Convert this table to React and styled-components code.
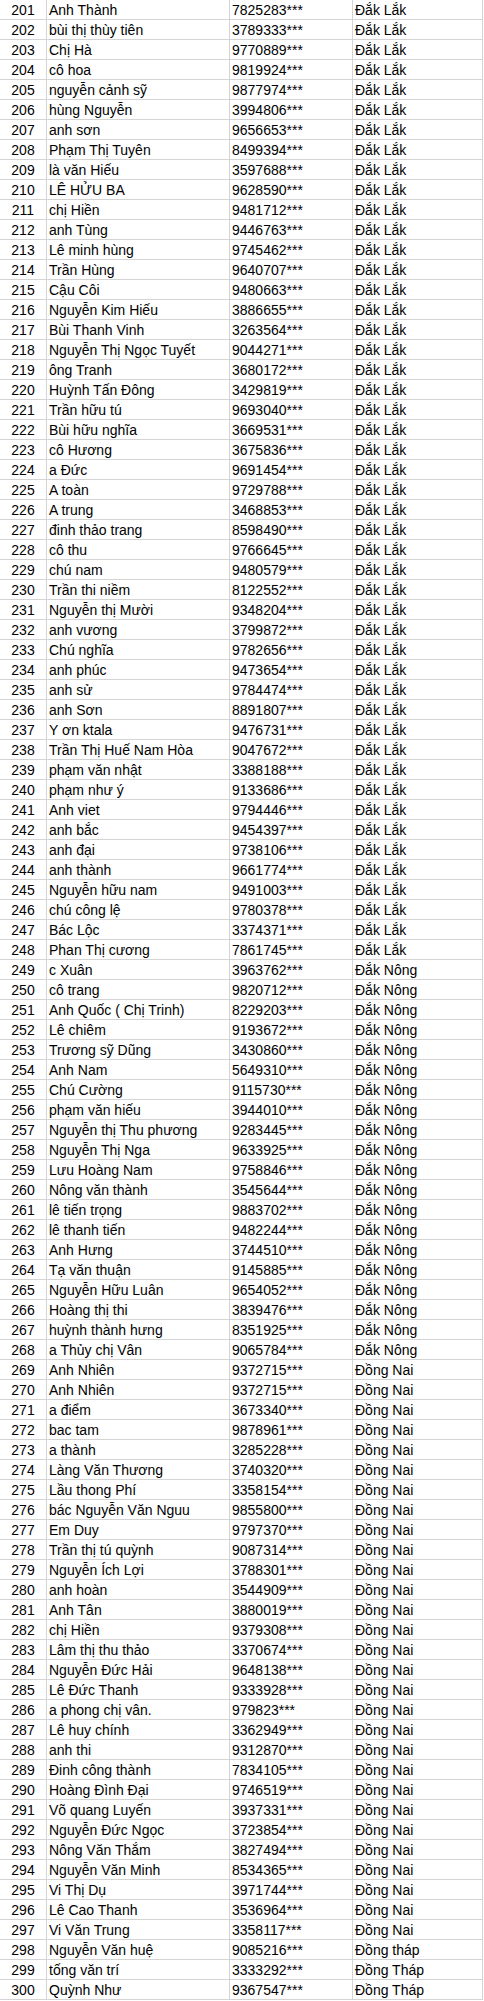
import React from 'react';
import styled, { createGlobalStyle } from 'styled-components';

const GlobalStyle = createGlobalStyle`
  html, body {
    margin: 0;
    padding: 0;
    background: #ffffff;
  }
`;

// name, phone prefix
const rows = [
  ['Anh Thành', '7825283'],
  ['bùi thị thùy tiên', '3789333'],
  ['Chị Hà', '9770889'],
  ['cô hoa', '9819924'],
  ['nguyễn cảnh sỹ', '9877974'],
  ['hùng Nguyễn', '3994806'],
  ['anh sơn', '9656653'],
  ['Phạm Thị Tuyên', '8499394'],
  ['là văn Hiếu', '3597688'],
  ['LÊ HỬU BA', '9628590'],
  ['chị Hiền', '9481712'],
  ['anh Tùng', '9446763'],
  ['Lê minh hùng', '9745462'],
  ['Trần Hùng', '9640707'],
  ['Cậu Côi', '9480663'],
  ['Nguyễn Kim Hiếu', '3886655'],
  ['Bùi Thanh Vinh', '3263564'],
  ['Nguyễn Thị Ngọc Tuyết', '9044271'],
  ['ông Tranh', '3680172'],
  ['Huỳnh Tấn Đông', '3429819'],
  ['Trần hữu tú', '9693040'],
  ['Bùi hữu nghĩa', '3669531'],
  ['cô Hương', '3675836'],
  ['a Đức', '9691454'],
  ['A toàn', '9729788'],
  ['A trung', '3468853'],
  ['đinh thảo trang', '8598490'],
  ['cô thu', '9766645'],
  ['chú nam', '9480579'],
  ['Trần thi niềm', '8122552'],
  ['Nguyễn thị Mười', '9348204'],
  ['anh vương', '3799872'],
  ['Chú nghĩa', '9782656'],
  ['anh phúc', '9473654'],
  ['anh sử', '9784474'],
  ['anh Sơn', '8891807'],
  ['Y ơn ktala', '9476731'],
  ['Trần Thị Huế Nam Hòa', '9047672'],
  ['phạm văn nhật', '3388188'],
  ['phạm như ý', '9133686'],
  ['Anh viet', '9794446'],
  ['anh bắc', '9454397'],
  ['anh đại', '9738106'],
  ['anh thành', '9661774'],
  ['Nguyễn hữu nam', '9491003'],
  ['chú công lệ', '9780378'],
  ['Bác Lộc', '3374371'],
  ['Phan Thị cương', '7861745'],
  ['c Xuân', '3963762'],
  ['cô trang', '9820712'],
  ['Anh Quốc ( Chị Trinh)', '8229203'],
  ['Lê chiêm', '9193672'],
  ['Trương sỹ Dũng', '3430860'],
  ['Anh Nam', '5649310'],
  ['Chú Cường', '9115730'],
  ['phạm văn hiếu', '3944010'],
  ['Nguyễn thị Thu phương', '9283445'],
  ['Nguyễn Thị Nga', '9633925'],
  ['Lưu Hoàng Nam', '9758846'],
  ['Nông văn thành', '3545644'],
  ['lê tiến trọng', '9883702'],
  ['lê thanh tiến', '9482244'],
  ['Anh Hưng', '3744510'],
  ['Tạ văn thuận', '9145885'],
  ['Nguyễn Hữu Luân', '9654052'],
  ['Hoàng thị thi', '3839476'],
  ['huỳnh thành hưng', '8351925'],
  ['a Thủy chị Vân', '9065784'],
  ['Anh Nhiên', '9372715'],
  ['Anh Nhiên', '9372715'],
  ['a điểm', '3673340'],
  ['bac tam', '9878961'],
  ['a thành', '3285228'],
  ['Làng Văn Thương', '3740320'],
  ['Lầu thong Phí', '3358154'],
  ['bác Nguyễn Văn Nguu', '9855800'],
  ['Em Duy', '9797370'],
  ['Trần thị tú quỳnh', '9087314'],
  ['Nguyễn Ích Lợi', '3788301'],
  ['anh hoàn', '3544909'],
  ['Anh Tân', '3880019'],
  ['chị Hiền', '9379308'],
  ['Lâm thị thu thảo', '3370674'],
  ['Nguyễn Đức Hải', '9648138'],
  ['Lê Đức Thanh', '9333928'],
  ['a phong chị vân.', '979823'],
  ['Lê huy chính', '3362949'],
  ['anh thi', '9312870'],
  ['Đinh công thành', '7834105'],
  ['Hoàng Đình Đại', '9746519'],
  ['Võ quang Luyến', '3937331'],
  ['Nguyễn Đức Ngọc', '3723854'],
  ['Nông Văn Thắm', '3827494'],
  ['Nguyễn Văn Minh', '8534365'],
  ['Vi Thị Dụ', '3971744'],
  ['Lê Cao Thanh', '3536964'],
  ['Vi Văn Trung', '3358117'],
  ['Nguyễn Văn huệ', '9085216'],
  ['tống văn trí', '3333292'],
  ['Quỳnh Như', '9367547'],
];

function provinceFor(no) {
  if (no <= 248) return 'Đắk Lắk';
  if (no <= 268) return 'Đắk Nông';
  if (no <= 297) return 'Đồng Nai';
  if (no === 298) return 'Đồng tháp';
  return 'Đồng Tháp';
}

export default function App() {
  return (
    <>
      <GlobalStyle />
      <Sheet>
        {rows.map(([name, phone], i) => {
          const no = 201 + i;
          return (
            <Row key={no}>
              <Cell $center>{no}</Cell>
              <Cell>{name}</Cell>
              <Cell>{phone}***</Cell>
              <Cell>{provinceFor(no)}</Cell>
            </Row>
          );
        })}
      </Sheet>
    </>
  );
}

const Sheet = styled.div`
  width: 484px;
  display: flex;
  flex-direction: column;
  font-family: 'Liberation Sans', Arial, sans-serif;
  font-size: 14px;
  color: #000;
`;

const Row = styled.div`
  display: grid;
  grid-template-columns: 47px 183px 123px 130px;
  height: 20px;
`;

const Cell = styled.div`
  box-sizing: border-box;
  height: 20px;
  padding: 1px 0 0 ${p => (p.$center ? '0' : '2px')};
  line-height: 19px;
  text-align: ${p => (p.$center ? 'center' : 'left')};
  border-right: 1px solid #d4d4d4;
  border-bottom: 1px solid #d4d4d4;
  white-space: nowrap;
  overflow: hidden;
`;
